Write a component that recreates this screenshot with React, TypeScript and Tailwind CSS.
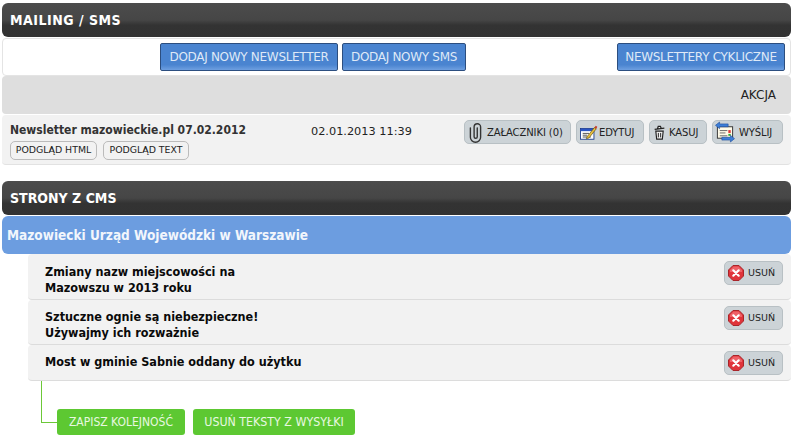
import React from "react";

const font = "font-['DejaVu_Sans','Liberation_Sans',sans-serif]";

function Clip() {
  return (
    <svg width="13" height="21" viewBox="0 0 14 21" fill="none">
      <path d="M1.500 5.500V15.500a5.500 5.500 0 0 0 11 0V4.500a3.500 3.500 0 0 0-7 0V15a1.700 1.700 0 0 0 3.400 0V5.500" stroke="#333" strokeWidth="1.500" strokeLinecap="round" />
    </svg>
  );
}

function Edit() {
  return (
    <svg width="18" height="17" viewBox="0 0 20 18">
      <rect x="0.500" y="4.500" width="15" height="12" fill="#fff" stroke="#1d3f8f" />
      <rect x="1" y="5" width="14" height="2.500" fill="#2a55c5" />
      <path d="M3 10h7M3 12h5M3 14h9" stroke="#444" strokeWidth="1" />
      <path d="M8 13.500l8-10 2 1.500-8 10-3 1z" fill="#e8c040" stroke="#5a4a10" strokeWidth="0.700" />
      <path d="M16 3.500l1.500-2 1.700 1.200-1.200 2.300z" fill="#c83a2a" />
    </svg>
  );
}

function Trash() {
  return (
    <svg width="13" height="15" viewBox="0 0 14 17">
      <path d="M2.800 7h8.400l-1 9H3.800z" fill="#f0f0f0" stroke="#222" strokeWidth="1.300" />
      <path d="M1.500 5l11-1.500M4.800 4l.8-2.500h2.400l.8 2" fill="#eee" stroke="#222" strokeWidth="1.400" />
      <path d="M5.700 9v5M8.300 9v5" stroke="#222" strokeWidth="1.100" />
    </svg>
  );
}

function Send() {
  return (
    <svg width="20" height="22" viewBox="0 0 21 22">
      <rect x="2.500" y="5.500" width="16" height="12" fill="#fffbe8" stroke="#333" />
      <path d="M5 9.500h8M5 12h6M5 15h8" stroke="#666" strokeWidth="1" />
      <rect x="14" y="9" width="2.500" height="3" fill="#d33" />
      <rect x="14" y="13" width="2.500" height="2" fill="#3a3" />
      <path d="M0.500 4L4.800 0.500v2h9v3h-9v2z" fill="#3d7fd8" stroke="#1c4a9a" strokeWidth="0.600" />
      <path d="M20.500 18L16.200 21.500v-2h-9v-3h9v-2z" fill="#3d7fd8" stroke="#1c4a9a" strokeWidth="0.600" />
    </svg>
  );
}

function Remove() {
  return (
    <svg width="16" height="16" viewBox="0 0 16 16">
      <path d="M5 0.500h6L15.500 5v6L11 15.500H5L0.500 11V5z" fill="#e0343a" stroke="#a8262a" />
      <path d="M5.500 1.500h5L14 5v2H2V5z" fill="#f3757a" opacity="0.700" />
      <path d="M5.300 5.300l5.400 5.400M10.700 5.300l-5.400 5.400" stroke="#fff" strokeWidth="2.200" strokeLinecap="round" />
    </svg>
  );
}

function Header({ children, cls }: { children: React.ReactNode; cls: string }) {
  return (
    <div className={`${cls} h-[34px] rounded-[6px] bg-[linear-gradient(#4c4c4c_0%,#464646_50%,#333_65%,#323232_100%)] pl-2 flex items-center text-[14px] font-bold font-stretch-condensed text-white`}>
      {children}
    </div>
  );
}

function BlueButton({ children, w }: { children: React.ReactNode; w: string }) {
  return (
    <button className={`${w} h-[28px] rounded-[2px] border border-[#2c4e7f] bg-[linear-gradient(#4a84d0_0%,#4a84d0_80%,#6e9fe0_100%)] text-[12px] tracking-[-0.3px] text-[#dfe9f7]`}>
      {children}
    </button>
  );
}

function Preview({ children, w }: { children: React.ReactNode; w: string }) {
  return (
    <button className={`${w} h-[19px] rounded-[5px] border border-[#bbbbbb] bg-[#f2f2f2] text-[9.400px] text-[#222]`}>
      {children}
    </button>
  );
}

function Action({ icon, label, cls }: { icon: React.ReactNode; label: string; cls: string }) {
  return (
    <button className={`${cls} h-[24px] rounded-[5px] border border-[#b8c0c4] bg-[#ccd3d7] flex items-center text-[10px] tracking-[-0.1px] text-[#222]`}>
      {icon}
      <span>{label}</span>
    </button>
  );
}

function CmsRow({ lines, h, textPt, btnPt }: { lines: string[]; h: string; textPt: string; btnPt: string }) {
  return (
    <div className={`${h} ml-[26px] rounded-[4px] border-b border-[#dcdcdc] bg-[#f2f2f2] flex justify-between pl-[17px] pr-2`}>
      <div className={`${textPt} text-[12.500px] leading-[16px] font-bold font-stretch-condensed text-[#0a0a0a]`}>
        {lines.map((l) => (
          <div key={l}>{l}</div>
        ))}
      </div>
      <div className={btnPt}>
        <button className="w-[59px] h-[24px] rounded-[5px] border border-[#b8c0c4] bg-[#ccd3d7] flex items-center pl-[3px] gap-[4px] text-[9.500px] text-[#222]">
          <Remove />
          <span>USUŃ</span>
        </button>
      </div>
    </div>
  );
}

export default function App() {
  return (
    <div className={`${font} w-[794px] h-[441px] bg-white px-[2px] pt-[3px] overflow-hidden flex flex-col`}>
      <div className="w-[789px]">
        <Header cls="tracking-[0.5px]">MAILING / SMS</Header>
        <div className="mt-[1px] h-[38px] rounded-[4px] border border-[#e4e4e4] bg-white flex items-center pl-[157px] pr-[5px]">
          <div className="flex gap-[4px]">
            <BlueButton w="w-[178px]">DODAJ NOWY NEWSLETTER</BlueButton>
            <BlueButton w="w-[124px]">DODAJ NOWY SMS</BlueButton>
          </div>
          <div className="ml-auto">
            <BlueButton w="w-[168px]">NEWSLETTERY CYKLICZNE</BlueButton>
          </div>
        </div>
        <div className="h-[38px] rounded-[4px] bg-[#dedede] flex items-center justify-end pr-[15px] text-[12px] text-[#222]">
          AKCJA
        </div>
        <div className="mt-[1px] h-[50px] rounded-[4px] border-b border-[#e2e2e2] bg-[#f2f2f2] flex pl-2 pr-2">
          <div className="w-[301px] pt-[8px]">
            <div className="text-[12px] leading-[15px] font-bold font-stretch-condensed text-[#333]">Newsletter mazowieckie.pl 07.02.2012</div>
            <div className="mt-[3px] flex gap-[6px]">
              <Preview w="w-[87px]">PODGLĄD HTML</Preview>
              <Preview w="w-[86px]">PODGLĄD TEXT</Preview>
            </div>
          </div>
          <div className="pt-[9px] text-[11.300px] leading-[15px] text-[#222]">02.01.2013 11:39</div>
          <div className="ml-auto pt-[5px] flex gap-[5px]">
            <Action icon={<Clip />} label="ZAŁACZNIKI (0)" cls="w-[107px] pl-[4px] gap-[5px]" />
            <Action icon={<Edit />} label="EDYTUJ" cls="w-[68px] pl-[3px] gap-[1px]" />
            <Action icon={<Trash />} label="KASUJ" cls="w-[58px] pl-[3px] gap-[3px]" />
            <Action icon={<Send />} label="WYŚLIJ" cls="w-[71px] pl-[2px] gap-[4px]" />
          </div>
        </div>

        <div className="mt-[16px]">
          <Header cls="">STRONY Z CMS</Header>
        </div>
        <div className="mt-[1px] h-[38px] rounded-[6px] bg-[#6c9de0] flex items-center pl-[5px] text-[13.500px] font-bold font-stretch-condensed text-[#f2f6fc]">
          Mazowiecki Urząd Wojewódzki w Warszawie
        </div>
        <CmsRow h="h-[46px]" textPt="pt-[10px]" btnPt="pt-[7px]" lines={["Zmiany nazw miejscowości na", "Mazowszu w 2013 roku"]} />
        <CmsRow h="h-[45px]" textPt="pt-[9px]" btnPt="pt-[6px]" lines={["Sztuczne ognie są niebezpieczne!", "Używajmy ich rozważnie"]} />
        <CmsRow h="h-[36px]" textPt="pt-[9px]" btnPt="pt-[6px]" lines={["Most w gminie Sabnie oddany do użytku"]} />
        <div className="flex items-end ml-[39px]">
          <div className="h-[42px] w-[16px] border-l border-b border-[#6cc838] mb-[12px]" />
          <div className="mt-[28px] flex gap-[8px]">
            <button className="h-[26px] w-[128px] rounded-[3px] bg-[#5dc832] text-[12px] font-stretch-condensed text-[#e8f8e0]">ZAPISZ KOLEJNOŚĆ</button>
            <button className="h-[26px] w-[162px] rounded-[3px] bg-[#5dc832] text-[12.300px] font-stretch-condensed text-[#e8f8e0]">USUŃ TEKSTY Z WYSYŁKI</button>
          </div>
        </div>
      </div>
    </div>
  );
}
